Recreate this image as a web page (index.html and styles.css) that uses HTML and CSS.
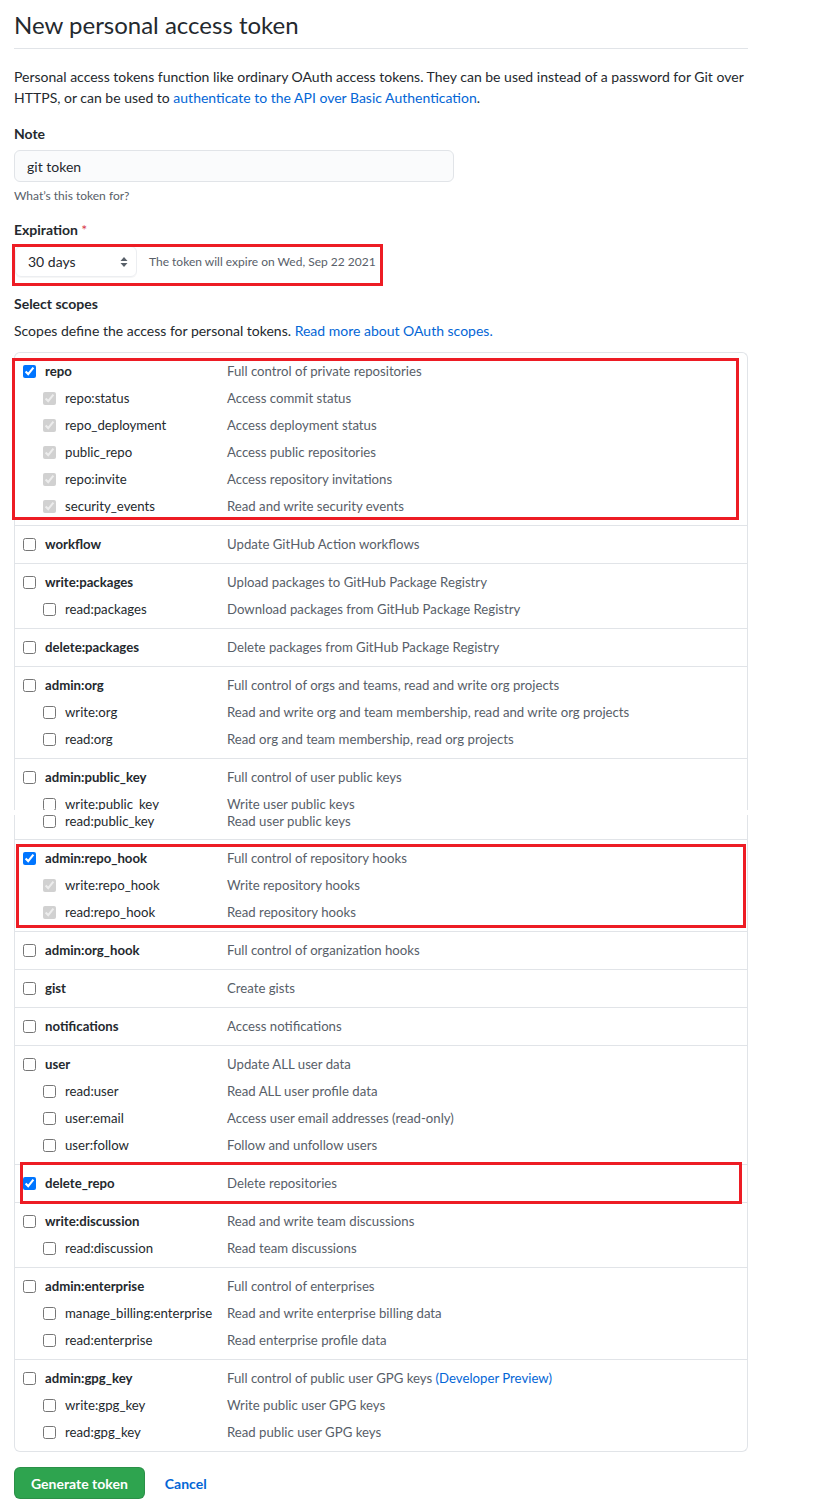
FILE: index.html
```html
<!DOCTYPE html>
<html>
<head>
    <meta charset="UTF-8">
    <title>New personal access token</title>
    <link rel="stylesheet" href="styles.css">
</head>
<body>
    <div class="page">
        <h1 class="subhead">New personal access token</h1>

        <p class="intro">
            Personal access tokens function like ordinary OAuth access tokens. They can be used instead of a password for Git over
            HTTPS, or can be used to <a href="#">authenticate to the API over Basic Authentication</a>.
        </p>

        <div class="form-group">
            <label class="form-label" for="note">Note</label>
            <input class="form-input" id="note" type="text" value="git token">
            <p class="note">What’s this token for?</p>
        </div>

        <div class="form-group">
            <div class="form-label">Expiration <span class="required">*</span></div>
            <div class="expiry">
                <div class="select">
                    <span>30 days</span>
                    <svg width="8" height="12" viewBox="0 0 8 12"><path d="M4 1 L7.5 5 H0.5 Z M4 11 L7.5 7 H0.5 Z" fill="#586069"/></svg>
                </div>
                <span class="note">The token will expire on Wed, Sep 22 2021</span>
            </div>
        </div>

        <div class="form-label scopes-title">Select scopes</div>
        <p class="scopes-help">Scopes define the access for personal tokens. <a href="#">Read more about OAuth scopes.</a></p>

        <div class="scopes scopes-top">
            <ul class="group">
                <li class="scope"><label class="scope-name"><input type="checkbox" checked>repo</label><span class="scope-desc">Full control of private repositories</span></li>
                <li class="scope child"><label class="scope-name"><input type="checkbox" checked disabled>repo:status</label><span class="scope-desc">Access commit status</span></li>
                <li class="scope child"><label class="scope-name"><input type="checkbox" checked disabled>repo_deployment</label><span class="scope-desc">Access deployment status</span></li>
                <li class="scope child"><label class="scope-name"><input type="checkbox" checked disabled>public_repo</label><span class="scope-desc">Access public repositories</span></li>
                <li class="scope child"><label class="scope-name"><input type="checkbox" checked disabled>repo:invite</label><span class="scope-desc">Access repository invitations</span></li>
                <li class="scope child"><label class="scope-name"><input type="checkbox" checked disabled>security_events</label><span class="scope-desc">Read and write security events</span></li>
            </ul>
            <ul class="group">
                <li class="scope"><label class="scope-name"><input type="checkbox">workflow</label><span class="scope-desc">Update GitHub Action workflows</span></li>
            </ul>
            <ul class="group">
                <li class="scope"><label class="scope-name"><input type="checkbox">write:packages</label><span class="scope-desc">Upload packages to GitHub Package Registry</span></li>
                <li class="scope child"><label class="scope-name"><input type="checkbox">read:packages</label><span class="scope-desc">Download packages from GitHub Package Registry</span></li>
            </ul>
            <ul class="group">
                <li class="scope"><label class="scope-name"><input type="checkbox">delete:packages</label><span class="scope-desc">Delete packages from GitHub Package Registry</span></li>
            </ul>
            <ul class="group">
                <li class="scope"><label class="scope-name"><input type="checkbox">admin:org</label><span class="scope-desc">Full control of orgs and teams, read and write org projects</span></li>
                <li class="scope child"><label class="scope-name"><input type="checkbox">write:org</label><span class="scope-desc">Read and write org and team membership, read and write org projects</span></li>
                <li class="scope child"><label class="scope-name"><input type="checkbox">read:org</label><span class="scope-desc">Read org and team membership, read org projects</span></li>
            </ul>
            <ul class="group group-open">
                <li class="scope"><label class="scope-name"><input type="checkbox">admin:public_key</label><span class="scope-desc">Full control of user public keys</span></li>
                <li class="cut-bottom">
                    <div class="scope child"><label class="scope-name"><input type="checkbox">write:public_key</label><span class="scope-desc">Write user public keys</span></div>
                </li>
            </ul>
        </div>

        <div class="scopes scopes-bottom">
            <ul class="group group-rest">
                <li class="cut-top">
                    <div class="scope child"><label class="scope-name"><input type="checkbox">read:public_key</label><span class="scope-desc">Read user public keys</span></div>
                </li>
            </ul>
            <ul class="group">
                <li class="scope"><label class="scope-name"><input type="checkbox" checked>admin:repo_hook</label><span class="scope-desc">Full control of repository hooks</span></li>
                <li class="scope child"><label class="scope-name"><input type="checkbox" checked disabled>write:repo_hook</label><span class="scope-desc">Write repository hooks</span></li>
                <li class="scope child"><label class="scope-name"><input type="checkbox" checked disabled>read:repo_hook</label><span class="scope-desc">Read repository hooks</span></li>
            </ul>
            <ul class="group">
                <li class="scope"><label class="scope-name"><input type="checkbox">admin:org_hook</label><span class="scope-desc">Full control of organization hooks</span></li>
            </ul>
            <ul class="group">
                <li class="scope"><label class="scope-name"><input type="checkbox">gist</label><span class="scope-desc">Create gists</span></li>
            </ul>
            <ul class="group">
                <li class="scope"><label class="scope-name"><input type="checkbox">notifications</label><span class="scope-desc">Access notifications</span></li>
            </ul>
            <ul class="group">
                <li class="scope"><label class="scope-name"><input type="checkbox">user</label><span class="scope-desc">Update ALL user data</span></li>
                <li class="scope child"><label class="scope-name"><input type="checkbox">read:user</label><span class="scope-desc">Read ALL user profile data</span></li>
                <li class="scope child"><label class="scope-name"><input type="checkbox">user:email</label><span class="scope-desc">Access user email addresses (read-only)</span></li>
                <li class="scope child"><label class="scope-name"><input type="checkbox">user:follow</label><span class="scope-desc">Follow and unfollow users</span></li>
            </ul>
            <ul class="group">
                <li class="scope"><label class="scope-name"><input type="checkbox" checked>delete_repo</label><span class="scope-desc">Delete repositories</span></li>
            </ul>
            <ul class="group">
                <li class="scope"><label class="scope-name"><input type="checkbox">write:discussion</label><span class="scope-desc">Read and write team discussions</span></li>
                <li class="scope child"><label class="scope-name"><input type="checkbox">read:discussion</label><span class="scope-desc">Read team discussions</span></li>
            </ul>
            <ul class="group">
                <li class="scope"><label class="scope-name"><input type="checkbox">admin:enterprise</label><span class="scope-desc">Full control of enterprises</span></li>
                <li class="scope child"><label class="scope-name"><input type="checkbox">manage_billing:enterprise</label><span class="scope-desc">Read and write enterprise billing data</span></li>
                <li class="scope child"><label class="scope-name"><input type="checkbox">read:enterprise</label><span class="scope-desc">Read enterprise profile data</span></li>
            </ul>
            <ul class="group">
                <li class="scope"><label class="scope-name"><input type="checkbox">admin:gpg_key</label><span class="scope-desc">Full control of public user GPG keys <a href="#">(Developer Preview)</a></span></li>
                <li class="scope child"><label class="scope-name"><input type="checkbox">write:gpg_key</label><span class="scope-desc">Write public user GPG keys</span></li>
                <li class="scope child"><label class="scope-name"><input type="checkbox">read:gpg_key</label><span class="scope-desc">Read public user GPG keys</span></li>
            </ul>
        </div>

        <div class="actions">
            <button class="btn-primary" type="button">Generate token</button>
            <a class="cancel" href="#">Cancel</a>
        </div>
    </div>

    <!-- red annotation frames drawn over the screenshot -->
    <div class="mark mark-expiry"></div>
    <div class="mark mark-repo"></div>
    <div class="mark mark-hook"></div>
    <div class="mark mark-delete"></div>
</body>
</html>
```
FILE: styles.css
```css
body {
    margin: 0;
    position: relative;
    font-family: Lato, "Liberation Sans", sans-serif;
    font-size: 14px;
    line-height: 1.5;
    color: #24292e;
    background: #fff;
}
a {
    color: #0366d6;
    text-decoration: none;
}
.page {
    width: 734px;
    padding: 10px 0 0 14px;
}
.subhead {
    margin: 0;
    padding-bottom: 8px;
    font-size: 24px;
    font-weight: 400;
    line-height: 30px;
    border-bottom: 1px solid #e1e4e8;
}
.intro {
    margin: 17px 0 0;
    line-height: 21px;
}
.form-group {
    margin-top: 15px;
}
.form-group + .form-group {
    margin-top: 14px;
}
.form-label {
    display: block;
    font-weight: 700;
    line-height: 21px;
    margin-bottom: 6px;
}
.required {
    color: #d73a49;
    font-weight: 400;
}
.form-input {
    display: block;
    box-sizing: border-box;
    width: 440px;
    height: 32px;
    margin: 0;
    padding: 0 12px;
    font-family: inherit;
    font-size: 14px;
    color: #24292e;
    background: #fafbfc;
    border: 1px solid #e1e4e8;
    border-radius: 6px;
    outline: none;
}
.note {
    margin: 5px 0 0;
    font-size: 12px;
    line-height: 18px;
    color: #586069;
}
.expiry {
    display: flex;
    align-items: center;
    gap: 12px;
    padding-left: 1px;
}
.expiry .note {
    margin: 0;
}
.select {
    box-sizing: border-box;
    width: 122px;
    height: 31px;
    display: flex;
    align-items: center;
    justify-content: space-between;
    padding: 0 8px 0 12px;
    border: 1px solid #eceef1;
    border-radius: 6px;
    box-shadow: 0 1px 0 rgba(27, 31, 35, 0.04);
}
.scopes-title {
    margin: 16px 0 0;
}
.scopes-help {
    margin: 6px 0 0;
    line-height: 21px;
}
.scopes {
    border: 1px solid #e1e4e8;
}
.scopes-top {
    margin-top: 11px;
    border-bottom: none;
    border-radius: 6px 6px 0 0;
}
.scopes-bottom {
    margin-top: 5px;
    border-top: none;
    border-radius: 0 0 6px 6px;
}
.group {
    list-style: none;
    margin: 0;
    padding: 5px 0;
    border-top: 1px solid #e1e4e8;
}
.scopes-top .group:first-child {
    border-top: none;
}
.group-open {
    padding-bottom: 0;
}
.scopes-bottom .group-rest {
    border-top: none;
    padding-top: 0;
}
.scope {
    display: flex;
    align-items: center;
    height: 27px;
    padding-left: 8px;
    font-size: 13.2px;
    white-space: nowrap;
}
.scope.child {
    padding-left: 28px;
}
.scope-name {
    display: flex;
    align-items: center;
    gap: 9px;
    width: 204px;
    font-weight: 700;
}
.child .scope-name {
    width: 184px;
    font-weight: 400;
}
.scope-name input {
    width: 13px;
    height: 13px;
    margin: 0;
    flex: none;
}
.scope-desc {
    color: #586069;
}
.cut-bottom {
    height: 19px;
    overflow: hidden;
}
.cut-top {
    height: 19px;
    overflow: hidden;
}
.cut-top .scope {
    margin-top: -7px;
}
.actions {
    display: flex;
    align-items: center;
    gap: 20px;
    margin-top: 15px;
}
.btn-primary {
    height: 32px;
    padding: 0 16px;
    font-family: inherit;
    font-size: 14px;
    font-weight: 700;
    color: #fff;
    background: #2ea44f;
    border: 1px solid rgba(27, 31, 35, 0.15);
    border-radius: 6px;
}
.cancel {
    font-weight: 700;
}
.mark {
    position: absolute;
    box-sizing: border-box;
    border: 3px solid #ed1c24;
}
.mark-expiry {
    left: 12px;
    top: 244px;
    width: 371px;
    height: 42px;
}
.mark-repo {
    left: 12px;
    top: 358px;
    width: 727px;
    height: 162px;
}
.mark-hook {
    left: 16px;
    top: 844px;
    width: 730px;
    height: 84px;
}
.mark-delete {
    left: 20px;
    top: 1162px;
    width: 722px;
    height: 42px;
}
```
